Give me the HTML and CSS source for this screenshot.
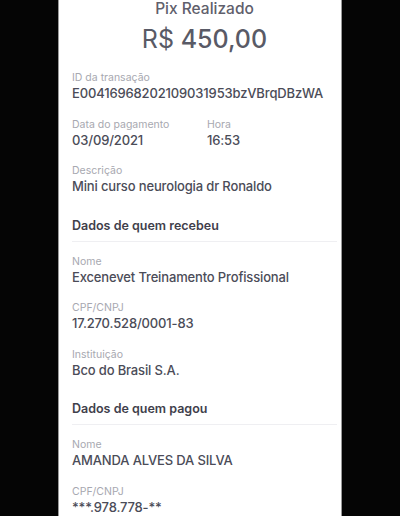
FILE: index.html
```html
<!DOCTYPE html>
<html lang="pt-BR">
<head>
    <meta charset="UTF-8">
    <meta name="viewport" content="width=device-width, initial-scale=1.0">
    <title>Pix Realizado</title>
    <link rel="stylesheet" href="styles.css">
</head>
<body>
    <div class="receipt">
        <h1 class="title">Pix Realizado</h1>
        <div class="amount"><span class="currency">R$</span> 450,00</div>

        <div class="field first">
            <div class="label">ID da transação</div>
            <div class="value">E00416968202109031953bzVBrqDBzWA</div>
        </div>

        <div class="field row">
            <div>
                <div class="label">Data do pagamento</div>
                <div class="value">03/09/2021</div>
            </div>
            <div>
                <div class="label">Hora</div>
                <div class="value">16:53</div>
            </div>
        </div>

        <div class="field">
            <div class="label">Descrição</div>
            <div class="value">Mini curso neurologia dr Ronaldo</div>
        </div>

        <h2 class="section-title">Dados de quem recebeu</h2>

        <div class="field after-title">
            <div class="label">Nome</div>
            <div class="value">Excenevet Treinamento Profissional</div>
        </div>
        <div class="field">
            <div class="label">CPF/CNPJ</div>
            <div class="value">17.270.528/0001-83</div>
        </div>
        <div class="field">
            <div class="label">Instituição</div>
            <div class="value">Bco do Brasil S.A.</div>
        </div>

        <h2 class="section-title">Dados de quem pagou</h2>

        <div class="field after-title">
            <div class="label">Nome</div>
            <div class="value">AMANDA ALVES DA SILVA</div>
        </div>
        <div class="field">
            <div class="label">CPF/CNPJ</div>
            <div class="value">***.978.778-**</div>
        </div>
    </div>
</body>
</html>
```

FILE: styles.css
```css
body {
    margin: 0;
    background-color: #050505;
    font-family: Inter, "Noto Sans", Arial, sans-serif;
}

.receipt {
    box-sizing: border-box;
    width: 284px;
    height: 516px;
    margin-left: 58px;
    padding: 0 4px 0 13px;
    background-color: #fff;
    border-left: 1px solid #9a9a9a;
    border-right: 1px solid #9a9a9a;
    overflow: hidden;
}

.title {
    margin: 0;
    font-size: 15.5px;
    line-height: 18px;
    font-weight: 500;
    color: #5f606c;
    text-align: center;
}

.amount {
    margin-top: 5px;
    font-size: 25px;
    line-height: 32px;
    font-weight: 500;
    color: #595a66;
    text-align: center;
}

.currency {
    font-weight: 400;
}

.field {
    margin-top: 15.5px;
}

.field.first {
    margin-top: 15px;
}

.field.after-title {
    margin-top: 12px;
}

.row {
    display: grid;
    grid-template-columns: 135px 1fr;
}

.label {
    font-size: 10.5px;
    line-height: 16px;
    color: #a7a8b0;
}

.value {
    font-size: 13px;
    line-height: 15px;
    font-weight: 500;
    letter-spacing: -0.15px;
    color: #4b4c58;
}

.section-title {
    margin: 21.5px 0 0;
    padding-bottom: 5px;
    font-size: 12.5px;
    line-height: 20px;
    font-weight: 600;
    color: #3f404b;
    border-bottom: 1px solid #efeff2;
}
```
